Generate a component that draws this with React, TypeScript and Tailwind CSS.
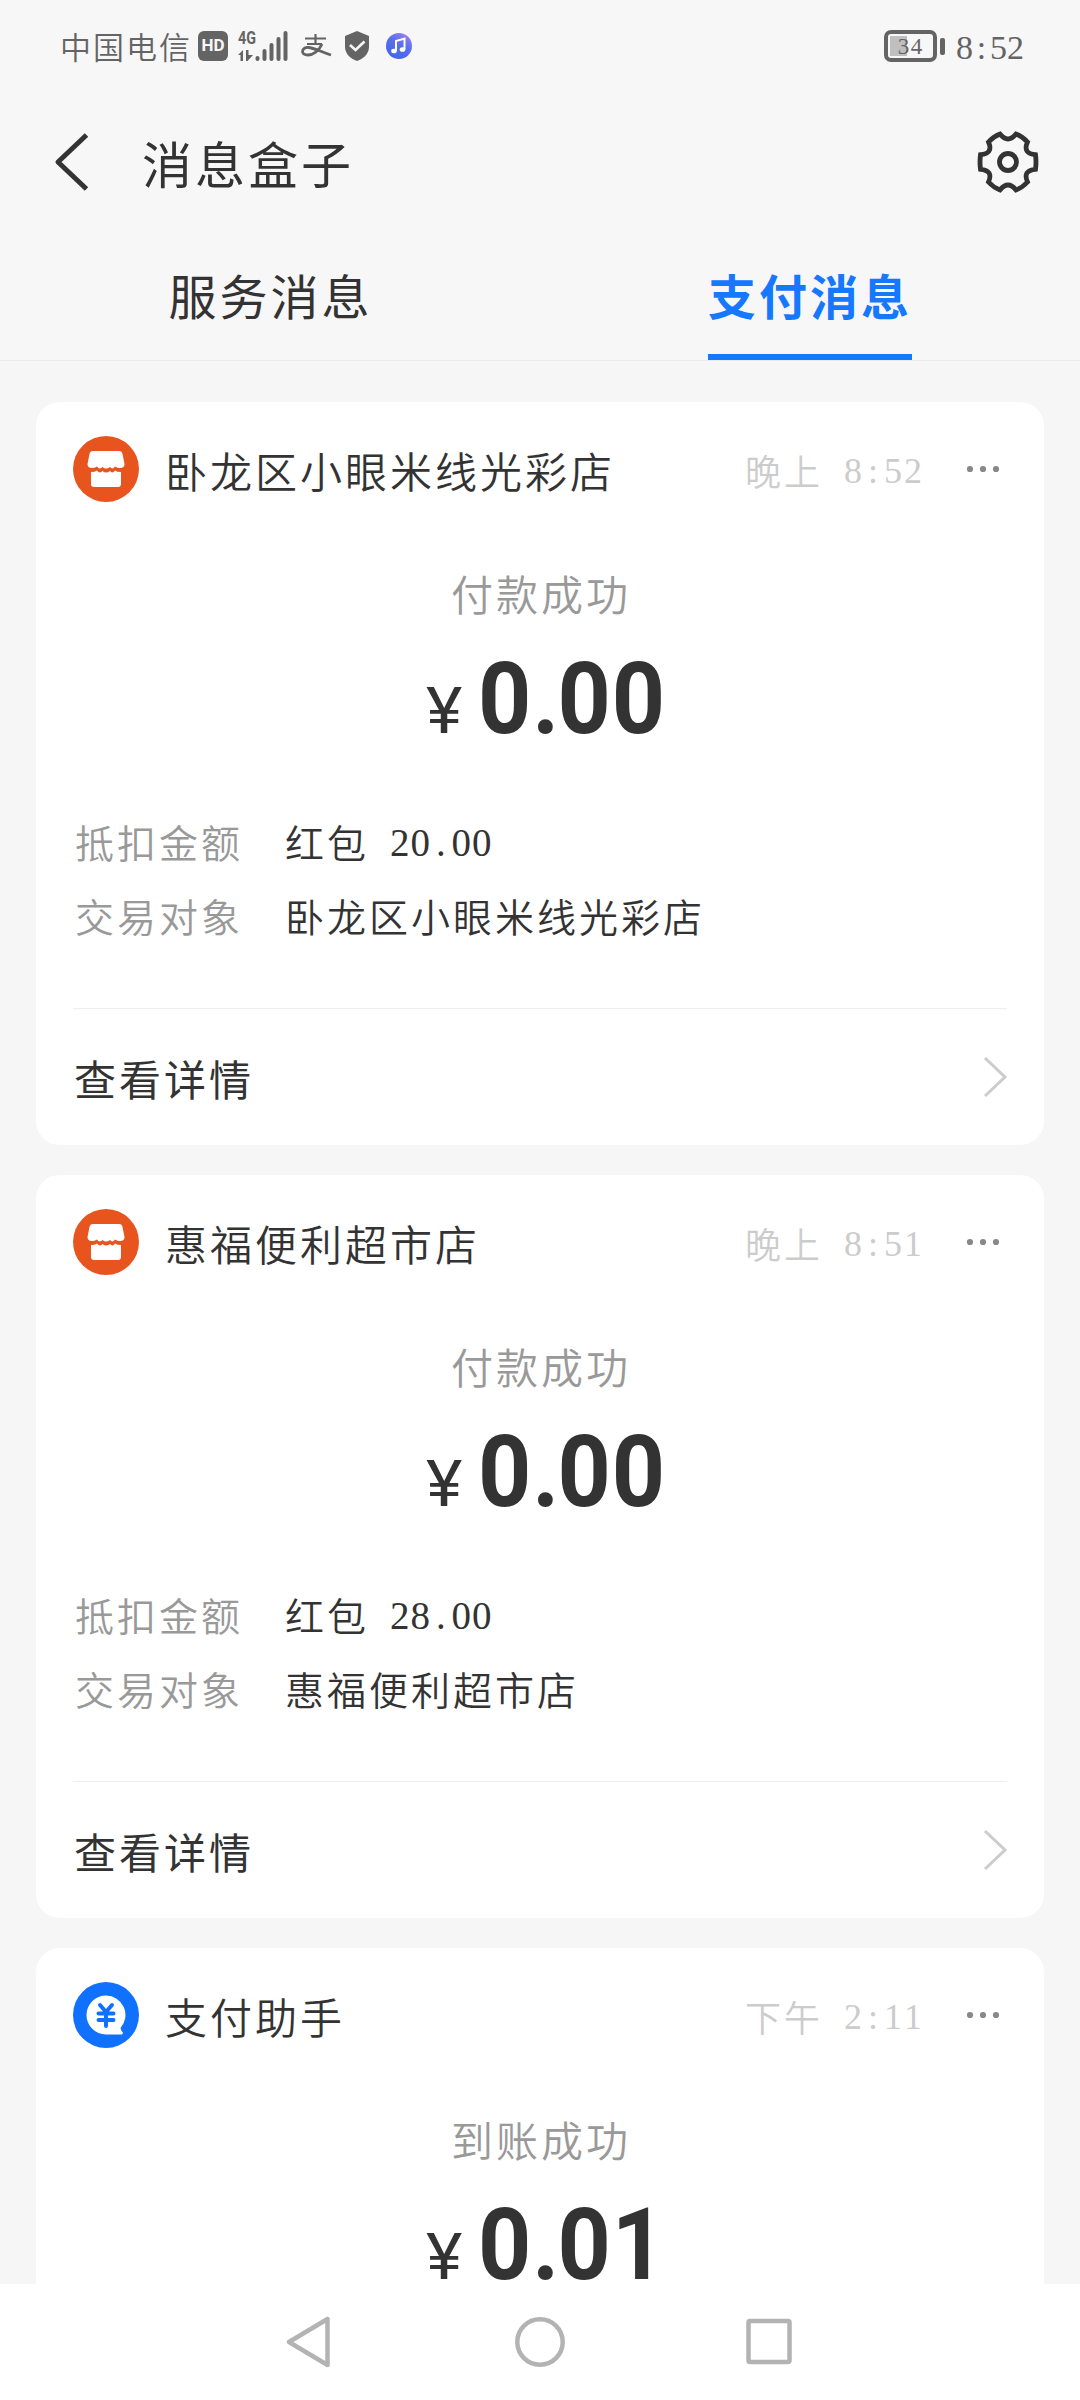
import React from 'react';

// Types
interface MessageDetail {
    label: string;
    value: string;
}

interface Message {
    id: number;
    kind: 'shop' | 'assistant';
    title: string;
    period: string;
    time: string;
    status: string;
    amount: string;
    details: MessageDetail[];
}

// Data
const messages: Message[] = [
    {
        id: 1,
        kind: 'shop',
        title: '卧龙区小眼米线光彩店',
        period: '晚上',
        time: '8:52',
        status: '付款成功',
        amount: '0.00',
        details: [
            { label: '抵扣金额', value: '红包 20.00' },
            { label: '交易对象', value: '卧龙区小眼米线光彩店' },
        ],
    },
    {
        id: 2,
        kind: 'shop',
        title: '惠福便利超市店',
        period: '晚上',
        time: '8:51',
        status: '付款成功',
        amount: '0.00',
        details: [
            { label: '抵扣金额', value: '红包 28.00' },
            { label: '交易对象', value: '惠福便利超市店' },
        ],
    },
    {
        id: 3,
        kind: 'assistant',
        title: '支付助手',
        period: '下午',
        time: '2:11',
        status: '到账成功',
        amount: '0.01',
        details: [],
    },
];

// Component - HalfWidth
// Latin characters sit in equal cells, half as wide as a Chinese character
function HalfWidth({ text, cell }: { text: string; cell: string }) {
    return (
        <span className="flex font-['Liberation_Serif',serif] font-normal tracking-normal">
            {text.split('').map((character, index) => (
                <span key={index} className={`${cell} text-center whitespace-pre`}>
                    {character}
                </span>
            ))}
        </span>
    );
}

// Component - StatusBar
function StatusBar() {
    return (
        <div className="flex h-[94px] shrink-0 items-start justify-between pr-[56px] pl-[60px] text-[#646464]">
            <div className="flex h-[92px] items-center">
                <span className="w-[138px] text-[31px] font-[350] tracking-[2px]">中国电信</span>
                <span className="flex h-[30px] w-[30px] items-center justify-center rounded-[6px] bg-[#646464] font-[Roboto,sans-serif] text-[17px] font-bold text-[#f7f7f7]">
                    HD
                </span>
                <svg className="ml-[10px] overflow-visible" width="52" height="34" viewBox="0 0 52 34" fill="#646464">
                    <text x="0" y="15" fontFamily="Roboto" fontWeight="700" fontSize="19" textLength="18" lengthAdjust="spacingAndGlyphs">
                        4G
                    </text>
                    <path d="M0 26L5 21V32H2.500V26ZM8 21H10.500V26H15L9.500 32H8Z" />
                    <rect x="17.500" y="27" width="4" height="5" rx="2" />
                    <rect x="24.500" y="20" width="4" height="12" rx="2" />
                    <rect x="31.500" y="14" width="4" height="18" rx="2" />
                    <rect x="38.500" y="8" width="4" height="24" rx="2" />
                    <rect x="45.500" y="2" width="4" height="30" rx="2" />
                </svg>
                <svg className="ml-[11px]" width="31" height="26" viewBox="0 0 31 26" fill="none" stroke="#646464">
                    <path d="M4 5.500H25M14.500 1V11M6 11H21" strokeWidth="2.200" />
                    <path d="M21 11C18 18 12 22 7 22C3 22 1.500 20 1.500 18.500C1.500 15.500 4.500 14 8 14.500C15 15.500 20 19 30 22" strokeWidth="2.800" />
                </svg>
                <svg className="ml-[12px]" width="26" height="32" viewBox="0 0 26 32">
                    <path d="M13 1L25 6V17C25 24 19 29 13 31C7 29 1 24 1 17V6Z" fill="#646464" />
                    <path d="M6 15L11.500 20L20.500 11.500" fill="none" stroke="#f7f7f7" strokeWidth="2.600" />
                </svg>
                <svg className="ml-[16px]" width="26" height="26" viewBox="0 0 26 26">
                    <defs>
                        <linearGradient id="music" x1="0.800" y1="0" x2="0.200" y2="1">
                            <stop offset="0" stopColor="#9a83f2" />
                            <stop offset="0.400" stopColor="#5b6ff0" />
                            <stop offset="1" stopColor="#3e66e8" />
                        </linearGradient>
                    </defs>
                    <circle cx="13" cy="13" r="13" fill="url(#music)" />
                    <path d="M10 18V8L18.500 5.500V16.500" fill="none" stroke="#fff" strokeWidth="2" />
                    <ellipse cx="8" cy="18" rx="2.800" ry="2.300" fill="#fff" />
                    <ellipse cx="16.500" cy="16.500" rx="2.800" ry="2.300" fill="#fff" />
                </svg>
            </div>
            <div className="flex h-[92px] items-center">
                <div className="flex h-[32px] w-[53px] rounded-[7px] border-4 border-[#646464] p-[2px]">
                    <div className="flex h-full w-[17px] items-center bg-[#bfbfbf] pl-[7px] text-[23px] leading-none">
                        <HalfWidth text="34" cell="w-[13px]" />
                    </div>
                </div>
                <div className="ml-[3px] h-[17px] w-[5px] rounded-[2px] bg-[#646464]" />
                <div className="ml-[11px] pt-1 text-[34px] leading-none">
                    <HalfWidth text="8:52" cell="w-[17px]" />
                </div>
            </div>
        </div>
    );
}

// Component - Header
function Header() {
    return (
        <header className="flex h-[136px] shrink-0 items-center pr-[40px] pl-[54px]">
            <svg width="36" height="60" viewBox="0 0 36 60" fill="none" stroke="#333" strokeWidth="5">
                <path d="M32.500 3L4 30L32.500 57" strokeLinejoin="round" />
            </svg>
            <h1 className="mt-[1px] ml-[52px] flex-1 text-[50px] tracking-[3px]">消息盒子</h1>
            <svg width="64" height="64" viewBox="-32 -32 64 64" fill="none" stroke="#333" strokeWidth="4.800">
                <circle r="8.500" />
                <path d="M-8 -28Q-14.500 -25.500 -19.500 -20Q-14.400 -8.500 -27.500 -7.300Q-28.500 0 -27.500 7.300Q-14.400 8.500 -19.500 20Q-14.500 25.500 -8 28Q0 18 8 28Q14.500 25.500 19.500 20Q14.400 8.500 27.500 7.300Q28.500 0 27.500 -7.300Q14.400 -8.500 19.500 -20Q14.500 -25.500 8 -28Q0 -18 -8 -28Z" />
            </svg>
        </header>
    );
}

// Component - Tabs
function Tabs() {
    return (
        <nav className="flex h-[131px] shrink-0 border-b border-[#ebebeb] text-[48px] leading-[64px] tracking-[3px]">
            <div className="flex flex-1 justify-center">
                <span className="pt-[32px] pl-[1px]">服务消息</span>
            </div>
            <div className="flex flex-1 justify-center">
                <span className="border-b-[6px] border-[#1677ff] pt-[32px] font-bold text-[#1677ff]">支付消息</span>
            </div>
        </nav>
    );
}

// Component - Avatar
function Avatar({ kind }: { kind: Message['kind'] }) {
    if (kind === 'shop') {
        return (
            <svg width="66" height="66" viewBox="0 0 66 66">
                <circle cx="33" cy="33" r="33" fill="#e8541e" />
                <path
                    d="M20 15H46Q49 15 49.500 18L51.500 28Q51.500 32 47 32Q44.500 32 42 30.500Q39.500 34 37 31Q33 34 29.500 31Q26.500 34 24 30.500Q21.500 32 19 32Q14.500 32 14.500 28L16.500 18Q17 15 20 15Z"
                    fill="#fff"
                />
                <path
                    d="M18 36Q22 36 24 34.500Q26.500 38 29.500 35Q33 38 37 35Q39.500 38 42 34.500Q44 36 48 36V48Q48 51 45 51H21Q18 51 18 48Z"
                    fill="#fff"
                />
            </svg>
        );
    }

    return (
        <svg width="66" height="66" viewBox="0 0 66 66">
            <circle cx="33" cy="33" r="33" fill="#1071ff" />
            <path d="M33 13.500A19.500 19.500 0 1 0 33 52.500H49Q51 51 48.500 49L47.500 46A19.500 19.500 0 0 0 33 13.500Z" fill="#fff" />
            <path
                d="M27 23L33 30L39 23M33 30V44M25.500 31.500H40.500M25.500 38H40.500"
                fill="none"
                stroke="#1071ff"
                strokeWidth="4"
                strokeLinecap="round"
            />
        </svg>
    );
}

// Component - Amount
function Amount({ amount }: { amount: string }) {
    const [whole, fraction] = amount.split('.');

    return (
        <div className="mt-[38px] flex h-[76px] items-baseline pl-[353px] font-[Roboto,sans-serif] leading-[76px]">
            <span className="w-[52px] origin-left scale-x-[1.08] text-[64px]">¥</span>
            <span className="origin-left scale-x-[0.93] text-[100px] font-bold tracking-[1px]">
                {whole}
                <span className="tracking-[-2px]">.</span>
                {fraction}
            </span>
        </div>
    );
}

// Component - MessageCard
function MessageCard({ message }: { message: Message }) {
    return (
        <article className="h-[743px] shrink-0 rounded-[24px] bg-white px-[37px] pt-[34px]">
            {/* Sender */}
            <div className="flex h-[66px] items-center">
                <Avatar kind={message.kind} />
                <h2 className="mt-[1px] ml-[26px] flex-1 text-[42px] font-[350] tracking-[3px]">{message.title}</h2>
                <div className="mt-[1px] flex items-center text-[36px] font-[350] text-[#ccc]">
                    <span className="tracking-[3px]">{message.period}</span>
                    <div className="pt-[3px]">
                        <HalfWidth text={' ' + message.time} cell="w-[20px]" />
                    </div>
                </div>
                <svg className="mr-[6px] ml-[42px]" width="36" height="8" viewBox="0 0 36 8" fill="#888">
                    <circle cx="5" cy="4" r="3.100" />
                    <circle cx="18" cy="4" r="3.100" />
                    <circle cx="31" cy="4" r="3.100" />
                </svg>
            </div>

            {/* Amount */}
            <p className="mt-[61px] h-[60px] pl-[2px] text-center text-[42px] leading-[60px] font-[350] tracking-[3px] text-[#999]">
                {message.status}
            </p>
            <Amount amount={message.amount} />

            {message.details.length > 0 && (
                <>
                    {/* Details */}
                    <dl className="mt-[67px] h-[148px] text-[39px] leading-[74px] font-[350] tracking-[3px]">
                        {message.details.map((detail) => {
                            const [name, sum] = detail.value.split(' ');
                            return (
                                <div key={detail.label} className="flex h-[74px] pl-[2px]">
                                    <dt className="w-[210px] text-[#999]">{detail.label}</dt>
                                    <dd className="flex">
                                        {name}
                                        {sum && (
                                            <div className="pt-[2px]">
                                                <HalfWidth text={' ' + sum} cell="w-[20.500px]" />
                                            </div>
                                        )}
                                    </dd>
                                </div>
                            );
                        })}
                    </dl>

                    {/* Link */}
                    <div className="mt-[56px] flex h-[136px] items-center justify-between border-t border-[#eee] pl-[1px]">
                        <span className="mt-[2px] text-[42px] tracking-[3px]">查看详情</span>
                        <svg className="mr-[-1px]" width="26" height="42" viewBox="0 0 26 42" fill="none" stroke="#ccc" strokeWidth="3">
                            <path d="M3 2L23 21L3 40" />
                        </svg>
                    </div>
                </>
            )}
        </article>
    );
}

// Component - NavigationBar
function NavigationBar() {
    return (
        <div className="flex h-[116px] shrink-0 items-center bg-white pr-[286px] pl-[285px]">
            <svg className="w-full" height="56" viewBox="0 0 509 56" fill="none" stroke="#b3b3b3" strokeWidth="4.500">
                <path d="M42.500 5V51L4 28Z" strokeLinejoin="round" />
                <circle cx="255" cy="28" r="22.700" />
                <rect x="463.500" y="7" width="41" height="41" rx="1.500" />
            </svg>
        </div>
    );
}

// Component - App
export default function App() {
    return (
        <div className="flex h-[2400px] w-[1080px] flex-col overflow-hidden bg-[#f7f7f7] font-['Noto_Sans_CJK_SC',sans-serif] text-[#333]">
            <StatusBar />
            <Header />
            <Tabs />
            <main className="flex min-h-0 flex-1 flex-col gap-[30px] overflow-hidden bg-[#f6f6f6] px-[36px] pt-[41px]">
                {messages.map((message) => (
                    <MessageCard key={message.id} message={message} />
                ))}
            </main>
            <NavigationBar />
        </div>
    );
}
